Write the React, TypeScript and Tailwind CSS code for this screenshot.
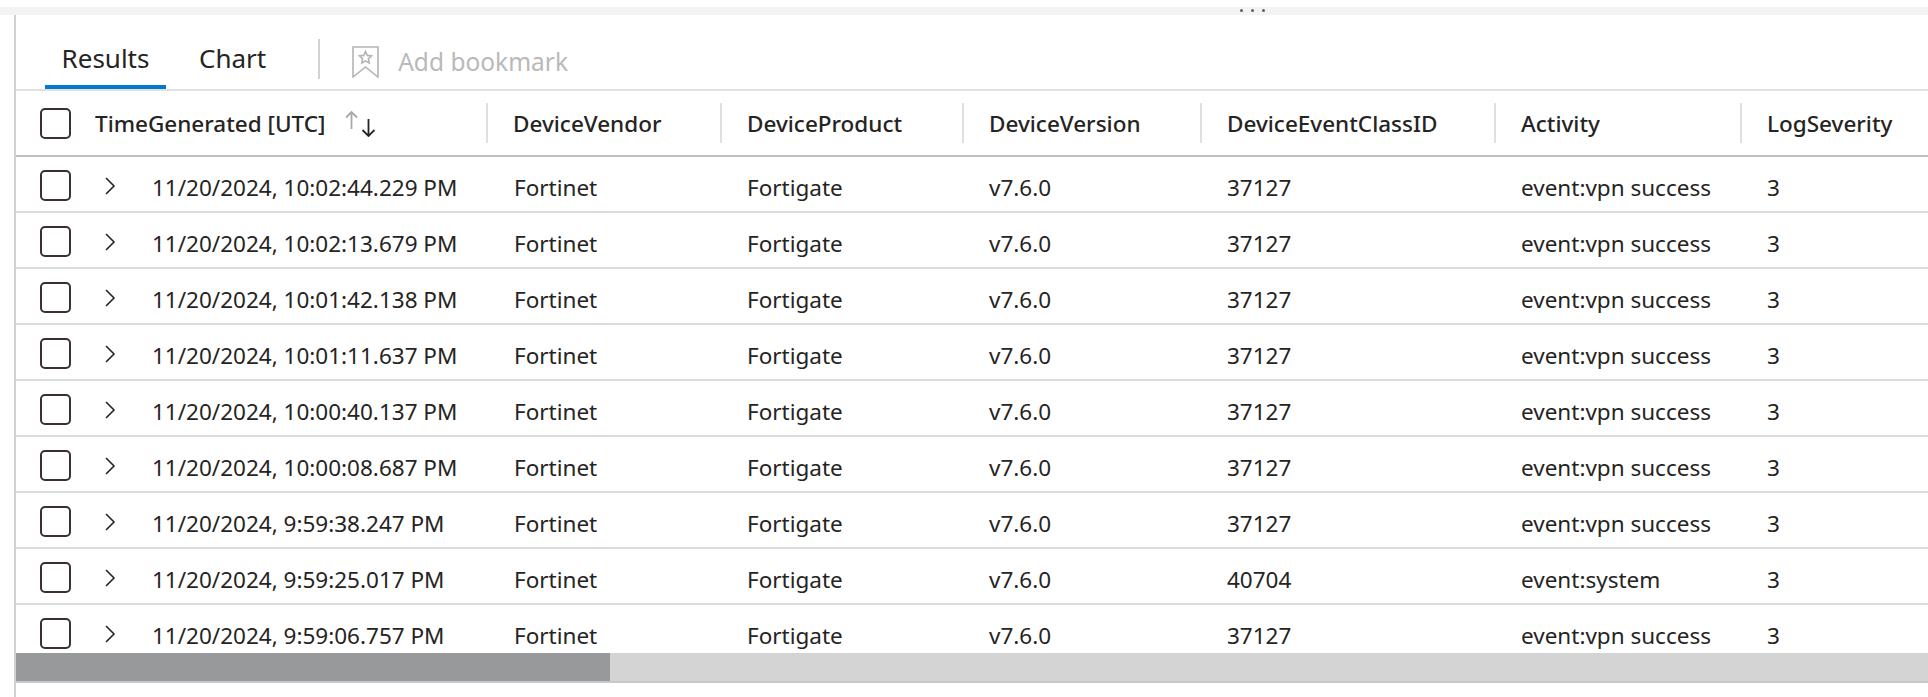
const columns = [
  { name: 'DeviceVendor', width: 'w-[234px]' },
  { name: 'DeviceProduct', width: 'w-[242px]' },
  { name: 'DeviceVersion', width: 'w-[238px]' },
  { name: 'DeviceEventClassID', width: 'w-[294px]' },
  { name: 'Activity', width: 'w-[246px]' },
  { name: 'LogSeverity', width: 'flex-1' },
];

const rows = [
  ['11/20/2024, 10:02:44.229 PM', '37127', 'event:vpn success'],
  ['11/20/2024, 10:02:13.679 PM', '37127', 'event:vpn success'],
  ['11/20/2024, 10:01:42.138 PM', '37127', 'event:vpn success'],
  ['11/20/2024, 10:01:11.637 PM', '37127', 'event:vpn success'],
  ['11/20/2024, 10:00:40.137 PM', '37127', 'event:vpn success'],
  ['11/20/2024, 10:00:08.687 PM', '37127', 'event:vpn success'],
  ['11/20/2024, 9:59:38.247 PM', '37127', 'event:vpn success'],
  ['11/20/2024, 9:59:25.017 PM', '40704', 'event:system'],
  ['11/20/2024, 9:59:06.757 PM', '37127', 'event:vpn success'],
];

function Checkbox() {
  return <div className="w-[31px] h-[31px] shrink-0 rounded-[5px] border-2 border-[#3b2f2f]" />;
}

export default function App() {
  return (
    <div className="h-[697px] bg-white text-[#252423] text-[22.5px] overflow-hidden font-['Noto_Sans',sans-serif]">
      <div className="h-[7px]" />
      <div className="h-[8px] bg-[#f3f3f3] relative">
        <div className="absolute left-[1240px] top-[2px] flex gap-[8px]">
          <span className="w-[3px] h-[3px] rounded-full bg-[#605e5c]" />
          <span className="w-[3px] h-[3px] rounded-full bg-[#605e5c]" />
          <span className="w-[3px] h-[3px] rounded-full bg-[#605e5c]" />
        </div>
      </div>
      <div className="ml-[14px] h-[682px] border-l-2 border-[#d0d0d0] flex flex-col">
        {/* Tabs */}
        <div className="h-[76px] flex items-end border-b-2 border-[#e1e1e1] shrink-0">
          <div className="ml-[29px] w-[121px] h-[50px] border-b-4 border-[#0078d4] flex justify-center items-start pt-[1px] text-[26px] leading-[36px]">
            Results
          </div>
          <div className="ml-[33px] h-[50px] pt-[1px] text-[26px] leading-[36px]">Chart</div>
          <div className="ml-[52px] mb-[10px] h-[40px] w-[2px] bg-[#d2d2d2]" />
          <div className="ml-[32px] mb-[9px] flex items-center gap-[19px] text-[#b9b9b9] text-[24.5px] h-[36px]">
            <svg width="27" height="32" viewBox="0 0 27 32" fill="none" stroke="#b4b4b4" strokeWidth="1.6">
              <path d="M1 1h25v30L13.500 21 1 31z" />
              <path d="M13.500 5.500l1.800 3.900 4.200.5-3.100 2.900.8 4.200-3.700-2.100-3.700 2.100.8-4.200-3.100-2.900 4.200-.5z" />
            </svg>
            Add bookmark
          </div>
        </div>
        {/* Header row */}
        <div className="h-[66px] shrink-0 flex items-center border-b-2 border-[#bcc0c4] font-medium">
          <div className="ml-[24px]"><Checkbox /></div>
          <div className="ml-[24px] w-[391px] flex items-center gap-[20px] shrink-0 pt-[2px]">
            TimeGenerated [UTC]
            <svg width="30" height="26" viewBox="0 0 30 26" fill="none" strokeWidth="1.8">
              <path d="M6.500 18V1M1 6.500l5.500-5.500 5.500 5.500" stroke="#a8a8a8" />
              <path d="M23.500 8v17M17.500 19l6 6 6-6" stroke="#252423" />
            </svg>
          </div>
          {columns.map((c) => (
            <div key={c.name} className={`${c.width} shrink-0 h-[40px] flex items-center border-l-2 border-[#dde0e3] pl-[25px] pt-[2px]`}>
              {c.name}
            </div>
          ))}
        </div>
        {/* Rows */}
        <div className="h-[496px] overflow-hidden shrink-0">
          {rows.map((r) => (
            <div key={r[0]} className="h-[56px] flex items-center border-b-2 border-[#dadde0]">
              <div className="ml-[24px] pt-[2px]"><Checkbox /></div>
              <div className="ml-[33px] w-[24px] pt-[4px]">
                <svg width="12" height="20" viewBox="0 0 12 20" fill="none" stroke="#252423" strokeWidth="1.6">
                  <path d="M2 2l8 8-8 8" />
                </svg>
              </div>
              <div className="ml-[24px] w-[360px] shrink-0 pt-[7px]">{r[0]}</div>
              <div className="w-[235px] shrink-0 pl-[2px] pt-[7px]">Fortinet</div>
              <div className="w-[242px] shrink-0 pt-[7px]">Fortigate</div>
              <div className="w-[238px] shrink-0 pt-[7px]">v7.6.0</div>
              <div className="w-[294px] shrink-0 pt-[7px]">{r[1]}</div>
              <div className="w-[246px] shrink-0 pt-[7px]">{r[2]}</div>
              <div className="pt-[7px]">3</div>
            </div>
          ))}
        </div>
        {/* Scrollbar */}
        <div className="h-[30px] shrink-0 bg-[#d4d4d4] border-b-2 border-[#c8c8c8]">
          <div className="w-[594px] h-full bg-[#97999b]" />
        </div>
      </div>
    </div>
  );
}
